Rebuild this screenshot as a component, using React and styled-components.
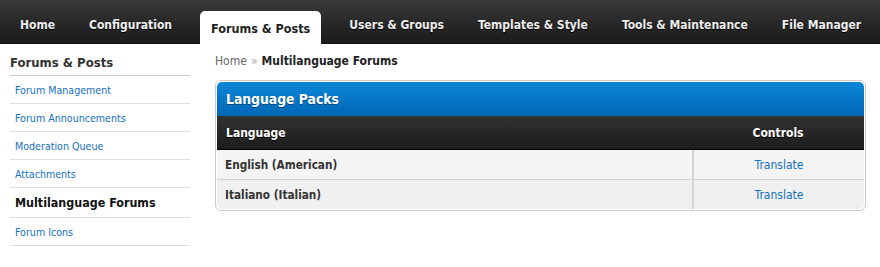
import React from 'react';
import styled, { createGlobalStyle } from 'styled-components';

const GlobalStyle = createGlobalStyle`
  html, body {
    margin: 0;
    padding: 0;
    background: #fff;
    font-family: "DejaVu Sans Condensed", "DejaVu Sans", Verdana, sans-serif;
    color: #333;
  }
`;

const TopNav = styled.nav`
  display: flex;
  align-items: flex-end;
  height: 44px;
  padding-left: 3px;
  background: linear-gradient(to bottom, #3a3a3a 0%, #2a2a2a 45%, #1c1c1c 100%);
  border-bottom: 1px solid #111;
  box-sizing: border-box;
`;

const NavItem = styled.a`
  display: flex;
  align-items: center;
  height: ${(p) => (p.$active ? '33px' : '43px')};
  padding: ${(p) => (p.$active ? '2px 11px 0' : '7px 17px 0')};
  margin: 0 ${(p) => (p.$active ? '11px' : '0')};
  margin-bottom: ${(p) => (p.$active ? '-1px' : '0')};
  box-sizing: border-box;
  border-radius: 5px 5px 0 0;
  background: ${(p) => (p.$active ? '#fff' : 'transparent')};
  color: ${(p) => (p.$active ? '#222' : '#eee')};
  font-size: ${(p) => (p.$active ? '12.5px' : '12px')};
  font-weight: bold;
  white-space: nowrap;
  text-decoration: none;
  text-shadow: ${(p) => (p.$active ? 'none' : '0 1px 0 #000')};
`;

const Content = styled.div`
  display: flex;
  gap: 25px;
  padding: 10px 14px 0 10px;
`;

const Sidebar = styled.aside`
  width: 180px;
  flex-shrink: 0;
`;

const SideTitle = styled.h3`
  margin: 0;
  padding: 1px 0 4px;
  font-size: 13px;
  line-height: 16px;
  font-weight: bold;
  color: #333;
  border-bottom: 1px solid #ccc;
`;

const SideLink = styled.a`
  display: flex;
  align-items: center;
  height: ${(p) => (p.$active ? '29px' : '27px')};
  padding: 0 5px;
  border-bottom: 1px solid #ddd;
  font-size: ${(p) => (p.$active ? '12.4px' : '10.6px')};
  font-weight: ${(p) => (p.$active ? 'bold' : 'normal')};
  color: ${(p) => (p.$active ? '#111' : '#1470c4')};
  text-decoration: none;
  white-space: nowrap;
`;

const Main = styled.main`
  flex: 1;
  min-width: 0;
`;

const Crumbs = styled.div`
  font-size: 12px;
  line-height: 15px;
  color: #666;
  white-space: nowrap;
`;

const CrumbSep = styled.span`
  color: #aaa;
  margin: 0 4px;
`;

const CrumbCurrent = styled.span`
  color: #222;
  font-weight: bold;
`;

const Panel = styled.div`
  margin-top: 11px;
  border: 1px solid #ccc;
  border-radius: 6px;
  padding: 1px;
  background: #fff;
`;

const PanelTitle = styled.div`
  display: flex;
  align-items: center;
  height: 34px;
  padding: 0 9px;
  border-radius: 5px 5px 0 0;
  background: linear-gradient(to bottom, #0a87d8 0%, #0066b5 100%);
  border-bottom: 1px solid #2f3b33;
  color: #fff;
  font-size: 13.8px;
  font-weight: bold;
  text-shadow: 0 1px 0 #00427a;
`;

const Table = styled.div`
  display: grid;
  grid-template-columns: 1fr 172px;
`;

const HeadCell = styled.div`
  display: flex;
  align-items: center;
  justify-content: ${(p) => (p.$center ? 'center' : 'flex-start')};
  height: 32px;
  padding: 0 9px;
  background: linear-gradient(to bottom, #303030 0%, #1d1d1d 100%);
  border-bottom: 1px solid #000;
  color: #fff;
  font-size: 12px;
  font-weight: bold;
  text-shadow: 0 1px 0 #000;
`;

const Cell = styled.div`
  display: flex;
  align-items: center;
  justify-content: ${(p) => (p.$center ? 'center' : 'flex-start')};
  height: 29px;
  padding: 0 8px;
  background: ${(p) => (p.$alt ? '#f0f0f0' : '#f4f4f4')};
  border-top: ${(p) => (p.$first ? 'none' : '1px solid #d2d2d2')};
  border-left: ${(p) => (p.$center ? '2px solid #d4d4d4' : 'none')};
  border-radius: ${(p) => p.$corner || '0'};
  font-size: ${(p) => (p.$center ? '12px' : '11.7px')};
  font-weight: ${(p) => (p.$center ? 'normal' : 'bold')};
  color: ${(p) => (p.$center ? '#1470c4' : '#333')};
`;

const tabs = ['Home', 'Configuration', 'Forums & Posts', 'Users & Groups', 'Templates & Style', 'Tools & Maintenance', 'File Manager'];
const links = ['Forum Management', 'Forum Announcements', 'Moderation Queue', 'Attachments', 'Multilanguage Forums', 'Forum Icons'];
const languages = ['English (American)', 'Italiano (Italian)'];

export default function App() {
  return (
    <>
      <GlobalStyle />
      <TopNav>
        {tabs.map((t) => (
          <NavItem key={t} $active={t === 'Forums & Posts'}>{t}</NavItem>
        ))}
      </TopNav>
      <Content>
        <Sidebar>
          <SideTitle>Forums &amp; Posts</SideTitle>
          {links.map((l) => (
            <SideLink key={l} $active={l === 'Multilanguage Forums'}>{l}</SideLink>
          ))}
        </Sidebar>
        <Main>
          <Crumbs>
            Home<CrumbSep>»</CrumbSep><CrumbCurrent>Multilanguage Forums</CrumbCurrent>
          </Crumbs>
          <Panel>
            <PanelTitle>Language Packs</PanelTitle>
            <Table>
              <HeadCell>Language</HeadCell>
              <HeadCell $center>Controls</HeadCell>
              {languages.map((lang, i) => {
                const last = i === languages.length - 1;
                return (
                  <React.Fragment key={lang}>
                    <Cell $alt={i % 2 === 1} $first={i === 0} $corner={last ? '0 0 0 5px' : '0'}>{lang}</Cell>
                    <Cell $alt={i % 2 === 1} $first={i === 0} $center $corner={last ? '0 0 5px 0' : '0'}>Translate</Cell>
                  </React.Fragment>
                );
              })}
            </Table>
          </Panel>
        </Main>
      </Content>
    </>
  );
}
